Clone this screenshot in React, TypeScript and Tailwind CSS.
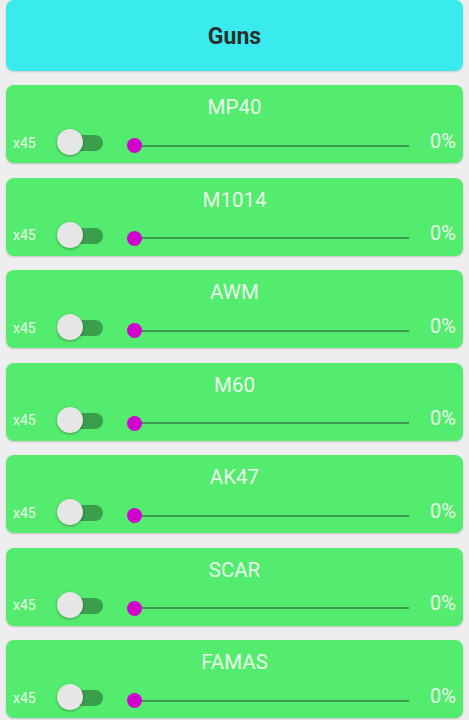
const guns = ["MP40", "M1014", "AWM", "M60", "AK47", "SCAR", "FAMAS"];

function Toggle() {
  return (
    <div className="relative h-[26px] w-[46px] shrink-0">
      <div className="absolute left-[6px] right-0 top-[6px] h-[16px] rounded-full bg-[#3a9f4a]" />
      <div className="absolute left-0 top-0 h-[26px] w-[26px] rounded-full bg-[#e6e6e6] shadow-[0_1px_3px_rgba(0,0,0,0.35)]" />
    </div>
  );
}

function Slider() {
  return (
    <div className="relative mt-[7px] h-[16px] flex-1">
      <div className="absolute left-[8px] right-0 top-[7px] h-[2px] bg-[#3c9a4c]" />
      <div className="absolute left-0 top-[0.5px] h-[15px] w-[15px] rounded-full bg-[#d200cf]" />
    </div>
  );
}

function GunCard({ name }: { name: string }) {
  return (
    <div className="flex h-[78px] flex-col rounded-[8px] bg-[#54ec6e] pt-[9px] shadow-[0_1px_2px_rgba(0,0,0,0.18)]">
      <div className="h-[26px] text-center text-[20.5px] leading-[26px] text-[#eaf7ea]">{name}</div>
      <div className="mt-[5px] flex h-[34px] items-center pl-[7px] pr-[7px]">
        <span className="mt-[1px] w-[44px] text-[14px] leading-none text-[#eaf7ea]">x45</span>
        <Toggle />
        <div className="ml-[24px] flex flex-1">
          <Slider />
        </div>
        <span className="mt-[-3px] w-[47px] text-right text-[20px] leading-none text-[#eaf7ea]">0%</span>
      </div>
    </div>
  );
}

export default function App() {
  return (
    <div
      className="min-h-[720px] w-[469px] overflow-hidden bg-[#eeeeee] px-[6px]"
      style={{ fontFamily: "Roboto, 'Liberation Sans', sans-serif" }}
    >
      <div className="flex h-[71px] items-center justify-center rounded-[8px] bg-[#3aebee] pt-[3px] shadow-[0_1px_2px_rgba(0,0,0,0.15)]">
        <span className="text-[23px] font-bold text-[#2b2f30]">Guns</span>
      </div>
      <div className="mt-[14px] flex flex-col gap-[14.5px]">
        {guns.map((g) => (
          <GunCard key={g} name={g} />
        ))}
      </div>
    </div>
  );
}
